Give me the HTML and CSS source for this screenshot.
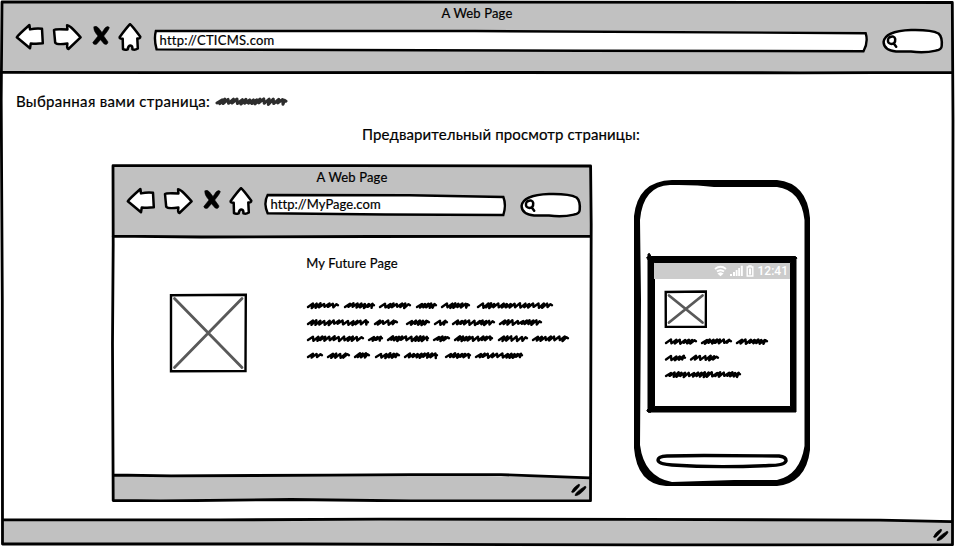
FILE: index.html
```html
<!DOCTYPE html>
<html lang="ru">
<head>
<meta charset="utf-8">
<title>A Web Page</title>
<link rel="stylesheet" href="styles.css">
</head>
<body>
<svg class="defs" width="0" height="0" aria-hidden="true">
  <symbol id="back" viewBox="0 0 30 30"><path d="M1.8 15.3Q3 13.2 14.4 3L15 7.4Q21 6 27 6.7L27.8 21.2Q22 22 15.8 21.4L15 26.2Q8 20.5 1.8 15.3Z"/></symbol>
  <symbol id="forward" viewBox="0 0 31 30"><path d="M2 8Q3 6.8 15.4 7.4L15.1 3.2Q16.5 1.8 28.6 15.4L16.4 27Q14.5 26.8 15.4 21.5Q5 23 3.2 20.7Z"/></symbol>
  <symbol id="stop" viewBox="0 0 20 24"><path class="solid" d="M3 3Q5 1 7.5 4L11 8.5L14 4Q17 1.500 18.300 3.500Q18 5.500 12.700 12L17 18Q16.500 21.500 13.200 20L9.500 15.700L5.500 20.200Q2 21 1.800 18.500L7 12Q2 6.500 3 3Z"/></symbol>
  <symbol id="home" viewBox="0 0 24 30"><path d="M12 2.200Q13.500 3 22.300 14.800Q22.300 16.800 19.300 16.400L19.800 26.500Q17 28.300 14.400 27.300Q14.600 23.400 12.500 23.400Q10.200 23.400 9.700 27.300Q7 28.300 5 27.200L4.700 16.700Q1.300 17 1.600 15.200Q8 6.500 12 2.200Z"/></symbol>
  <symbol id="search" viewBox="0 0 62 28"><path d="M29 3.100Q49 2.600 56.500 6.500Q60.500 10 59.700 19Q59.500 22.500 54 23.600Q42 26.400 29 24.500L14 24.500Q1.700 23 1.600 15Q3 4 29 3.100Z"/><path d="M7.200 10.500Q12.500 8 13.200 12Q13.500 16.800 9.500 17Q5.500 16.500 6 13Q6.200 11 7.200 10.500M11.800 16.500L14.200 19.700"/></symbol>
  <symbol id="grip" viewBox="0 0 20 18"><path class="solid" d="M2.500 11Q4 6.500 10 3Q12 4 8 8Q4 13 2.500 11ZM6 14.500Q6 11.500 16 5.200Q18.300 5.600 15.500 8.700Q9 15.500 6 14.500Z"/></symbol>
</svg>

<div class="window outer">
  <svg class="frame" viewBox="0 0 955 547">
    <path class="gray" d="M3 2H953V72H3ZM3 520L370 519L640 519L953 521.500V545H3Z"/>
    <path d="M2 2L400 2L952.300 2.500L953 120L952.500 544.700L640 544.900L300 544L2.500 544L2.300 300L1.200 100ZM3 72.300L160 72.700L500 72.500L800 72.800L952 72.300M3 519.800L220 519.900L380 519.200L640 519.300Q760 519.500 880 520.200L952 521.600"/>
  </svg>
  <header class="chrome">
    <div class="title">A Web Page</div>
    <div class="toolbar">
      <svg class="ico back"><use href="#back"/></svg>
      <svg class="ico forward"><use href="#forward"/></svg>
      <svg class="ico stop"><use href="#stop"/></svg>
      <svg class="ico home"><use href="#home"/></svg>
      <div class="url">
        <svg class="urlbox" viewBox="0 0 100 24" preserveAspectRatio="none"><path d="M.4 2L45 2L99.600 4.200Q100 13 99.300 22.200L60 21.800L.5 20.400Q.1 10 .4 2Z"/></svg>
        <span class="address">http://CTICMS.com</span>
      </div>
      <svg class="ico search"><use href="#search"/></svg>
    </div>
  </header>
  <main>
    <div class="selected"><span>Выбранная вами страница:</span><svg class="scribble chosen" width="74" height="14" data-lines="7.5:1-72"></svg></div>
    <h1>Предварительный просмотр страницы:</h1>
    <div class="previews">
      <section class="window inner">
        <svg class="frame" viewBox="0 0 482 338">
          <path class="gray" d="M2 2H480V72H2ZM2 311L300 310.500L480 314V336H2Z"/>
          <path d="M2 1.700L240 1.700L479.600 2L480.200 60L479.500 336.700L300 337L180 335.500L50 337L2.200 336.500L1.500 180L2.200 80ZM2 72.200L90 73L260 72.500L479 72.400M2 311L60 311.800L220 311.200L300 310.600L390 310.700L479 313.800"/>
        </svg>
        <header class="chrome">
          <div class="title">A Web Page</div>
          <div class="toolbar">
            <svg class="ico back"><use href="#back"/></svg>
            <svg class="ico forward"><use href="#forward"/></svg>
            <svg class="ico stop"><use href="#stop"/></svg>
            <svg class="ico home"><use href="#home"/></svg>
            <div class="url">
              <svg class="urlbox" viewBox="0 0 100 24" preserveAspectRatio="none"><path d="M1.500 2L60 2.300L98.700 4Q100 12 98.700 22L50 21.500L1.500 20.200Q-.3 10 1.500 2Z"/></svg>
              <span class="address">http://MyPage.com</span>
            </div>
            <svg class="ico search"><use href="#search"/></svg>
          </div>
        </header>
        <div class="page">
          <h2>My Future Page</h2>
          <div class="article">
            <svg class="placeholder" width="78" height="80" viewBox="0 0 78 80"><path class="box" d="M2 2.300L76.800 1.700L76.500 78L2 78.300Z"/><path class="cross" d="M5.500 5.500L73 74.500M73 5.500L5.500 74.500"/></svg>
            <svg class="scribble" width="264" height="64" data-lines="7.500:1-33,38-69,73-105,110-131,135-164,171-247;24.500:1-63,68-92,100-124,128-142,146-189,193-236;40.500:1-58,62-77,81-123,127-144,148-187,192-222,226-263;57.500:1-17,21-44,48-64,69-94,98-132,139-165,169-217"></svg>
          </div>
        </div>
        <footer><svg class="grip"><use href="#grip"/></svg></footer>
      </section>
      <section class="phone">
        <svg class="frame" viewBox="0 0 176 308">
          <path class="solid" fill-rule="evenodd" d="M0 36Q4 1 38 0H143Q173 3 176 38V270Q172 303 143 306H32Q3 304 0 268ZM6 40Q9 6 36 5Q62 4.500 80 7H143Q167 10 170.500 40V266Q166 295 143 300L100 300L38 302Q10 297 6 265L7 120Z"/>
          <path class="speaker" d="M33 276L70 275.500L145 276Q152.500 277 152 281Q150.500 285.500 135 285.500Q82 288 38 285Q24 284 24 280Q24 276.500 33 276Z"/>
        </svg>
        <div class="screen">
          <svg class="bezel" viewBox="0 0 152 160"><path d="M0.700 4.500L2 3.200V1L3.500 .5L5 3.500H149.500L151 5L150 6.500V159H5L3.500 160L.8 158L2 155.500V7ZM8.500 9.500V153.500H144.500V9.500Z"/></svg>
          <div class="status">
            <svg width="13" height="12" viewBox="0 0 13 12"><path class="wifi" d="M1 4Q6.500-.3 12 4M3 6.500Q6.500 3.800 10 6.500M5 8.700Q6.500 7.800 8 8.700L6.500 10Z"/></svg>
            <svg width="13" height="12" viewBox="0 0 13 12"><path class="fill" d="M0 9h2v2H0zM3 7h2v4H3zM5.700 5h1.800v6H5.700zM8.200 3H10v8H8.200zM10.800.7h2V11h-2z"/></svg>
            <svg width="8" height="12" viewBox="0 0 8 12"><path class="batt" d="M1.200 2H3V1H5V2H6.800V11H1.200Z"/><path class="fill" d="M3 3.500H5V9.500H3Z"/></svg>
            <span>12:41</span>
          </div>
          <div class="mobile">
            <svg class="placeholder" width="43" height="38" viewBox="0 0 43 38"><path class="box" d="M1.700 2L42 1.500L41.800 36.800L1.800 37Z"/><path class="cross" d="M5 5.500L38.500 32.500M38.500 5.500L5 32.500"/></svg>
            <svg class="scribble" width="106" height="48" data-lines="7.500:1-33,37-68,72-104;24:1-22,26-55;40.500:1-77"></svg>
          </div>
        </div>
      </section>
    </div>
  </main>
  <footer><svg class="grip"><use href="#grip"/></svg></footer>
</div>
<script src="scribble.js"></script>
</body>
</html>
```
FILE: styles.css
```css
* { box-sizing: border-box; }
body { margin: 0; background: #fff; color: #000; font-family: Lato, "Noto Sans", sans-serif; overflow: hidden; }
h1, h2 { margin: 0; font-weight: 400; }
svg { display: block; flex: none; }
.defs { position: absolute; }
.window { position: relative; display: flex; flex-direction: column; }
.outer { width: 955px; height: 547px; }
.inner { width: 482px; height: 338px; margin-left: 111px; }
.frame { position: absolute; inset: 0; width: 100%; height: 100%; fill: none; stroke: #000; stroke-width: 2.8; stroke-linejoin: round; stroke-linecap: round; }
.frame .gray { fill: #c1c1c1; stroke: none; }
.frame .solid { fill: #000; stroke: none; }
.chrome, main, .page, footer { position: relative; }
.chrome { height: 74px; }
.title { height: 22px; padding-top: 4px; text-align: center; font-size: 13px; line-height: 18px; letter-spacing: .15px; text-indent: -1px; }
.inner .title { text-indent: 0; }
.title, .address, h2, .selected span, h1 { -webkit-text-stroke: .2px #000; }
.toolbar { display: flex; height: 34px; padding: 0 11.5px 0 14.5px; }
.ico { fill: #fff; stroke: #000; stroke-width: 2.5; stroke-linejoin: round; stroke-linecap: round; }
.solid { fill: #000; stroke: #000; stroke-width: .6; }
.back { width: 30px; height: 30px; }
.forward { width: 31px; height: 30px; margin-left: 7px; }
.stop { width: 20px; height: 24px; margin: 2px 0 0 8.5px; }
.home { width: 24px; height: 30px; margin-left: 6.5px; }
.search { width: 62px; height: 28px; margin: 5px 0 0 13.5px; }
.url { position: relative; flex: 1; height: 24px; margin: 7px 0 0 11px; }
.urlbox { position: absolute; inset: 0; width: 100%; height: 100%; overflow: visible; fill: #fff; stroke: #000; stroke-width: 2.4; }
.urlbox path { vector-effect: non-scaling-stroke; }
.address { position: relative; display: block; padding: 3px 0 0 7px; font-size: 13px; line-height: 17px; letter-spacing: .25px; }
.inner .address { letter-spacing: .06px; }
main { flex: 1; }
.selected { display: flex; height: 50px; padding: 17px 0 0 16px; font-size: 15px; line-height: 20px; letter-spacing: .32px; }
.selected span { width: 199px; white-space: nowrap; }
.selected .scribble { margin-top: 3px; }
h1 { height: 40px; padding-left: 362px; font-size: 15px; line-height: 20px; letter-spacing: .12px; white-space: nowrap; }
.previews { display: flex; }
.page { flex: 1; }
h2 { padding-top: 16px; text-align: center; font-size: 13px; line-height: 18px; letter-spacing: .13px; }
.article { display: flex; gap: 59px; padding: 21px 0 0 58px; }
.article .scribble { margin-top: 5px; }
.placeholder { fill: #fff; stroke: #000; stroke-width: 2.4; }
.placeholder .cross { stroke: #595959; stroke-width: 2.8; stroke-linecap: round; }
.scribble { overflow: visible; fill: none; stroke: #000; stroke-width: 2.4; stroke-linejoin: round; stroke-linecap: round; }
.chosen { stroke: #2d2d2d; stroke-width: 3; }
footer { display: flex; justify-content: flex-end; height: 27px; padding: 6px 4px 0 0; }
.inner footer { height: 26px; padding: 5px 4px 0 0; }
.grip { width: 20px; height: 18px; }
.phone { position: relative; width: 176px; height: 308px; margin: 16px 0 0 41px; padding: 73px 0 0 12px; }
.frame .speaker { stroke-width: 3.4; }
.screen { position: relative; width: 152px; height: 160px; padding: 10px 8px 7px 8px; }
.bezel { position: absolute; inset: 0; width: 152px; height: 160px; fill: #000; fill-rule: evenodd; stroke: #000; stroke-width: 1; stroke-linejoin: round; }
.status { position: relative; display: flex; align-items: center; justify-content: flex-end; gap: 3px; height: 16px; padding-right: 2px; background: #ccc; color: #fff; font: 500 12px/16px Roboto, sans-serif; }
.status span { margin-left: 1px; }
.wifi { fill: none; stroke: #fff; stroke-width: 1.9; }
.fill { fill: #fff; }
.batt { fill: none; stroke: #fff; stroke-width: 1.4; }
.mobile { position: relative; padding: 11px 0 0 10px; }
.mobile .scribble { margin-top: 6px; }
```
FILE: scribble.js
```js
// Draws each "word" (start-end) of a line as a slanted pen scribble.
let seed = 11;
function rand() {
  seed = (seed * 16807) % 2147483647;
  return seed / 2147483647;
}
document.querySelectorAll('.scribble').forEach(svg => {
  const big = svg.classList.contains('chosen') ? 1.15 : 1;
  svg.dataset.lines.split(';').forEach(line => {
    const [yText, words] = line.split(':');
    const y = Number(yText);
    words.split(',').forEach(word => {
      const [a, b] = word.split('-').map(Number);
      let x = a + 1;
      let d = `M${x} ${y + 1.5}`;
      while (x < b - 7) {
        const up = (1.4 + rand() * 0.9) * big;
        const down = (1.2 + rand() * 1.4) * big;
        d += `L${(x + 5).toFixed(1)} ${(y - up).toFixed(1)}`;
        x += rand() < 0.3 ? 5.4 : 2.7 + rand() * 1.4;
        d += `L${x.toFixed(1)} ${(y + down).toFixed(1)}`;
      }
      d += `L${b - 2.5} ${y - 1.3}L${b - 1} ${y - 0.3}`;
      const path = document.createElementNS('http://www.w3.org/2000/svg', 'path');
      path.setAttribute('d', d);
      svg.appendChild(path);
    });
  });
});
```
